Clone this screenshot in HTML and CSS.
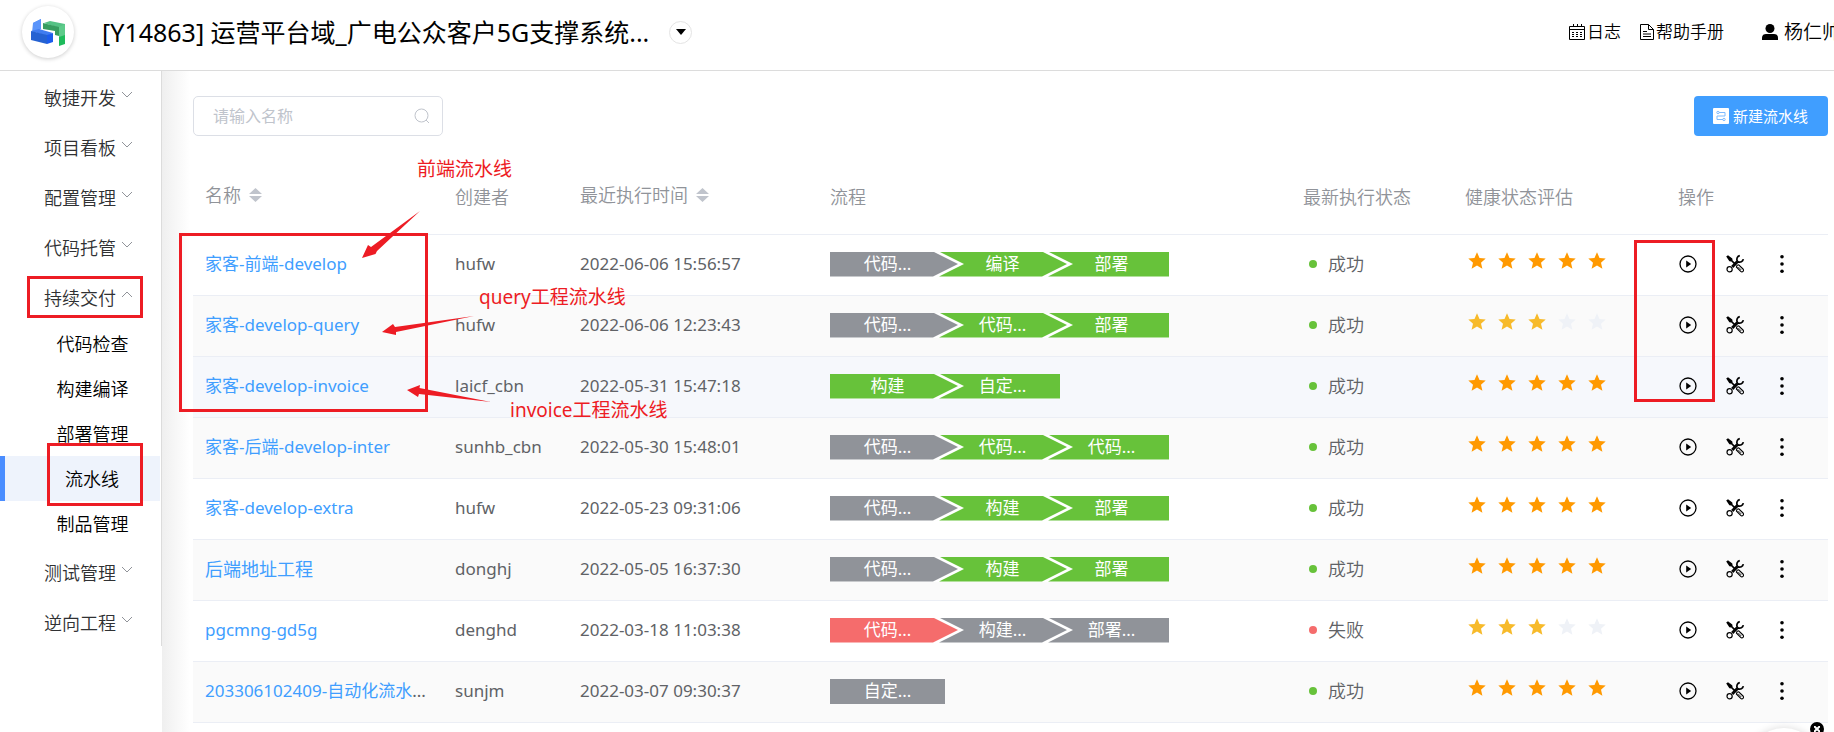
FILE: index.html
```html
<!DOCTYPE html>
<html lang="zh-CN">
<head>
<meta charset="utf-8">
<title>流水线</title>
<link rel="stylesheet" href="styles.css">
</head>
<body>
<svg class="sprite" aria-hidden="true">
  <symbol id="star" viewBox="0 0 24 24"><path d="M12 3.2l2.5 5.7 6.2.6-4.7 4.2 1.4 6.1-5.4-3.2-5.4 3.2L8 13.700 3.300 9.500l6.200-.6z"/></symbol>
  <symbol id="play" viewBox="0 0 20 20"><circle cx="10" cy="10" r="8" fill="none" stroke="currentColor" stroke-width="1.300"/><path d="M8.200 6.500v7l5-3.500z"/></symbol>
  <symbol id="tools" viewBox="0 0 20 20">
    <path d="M1.200 2.600 3 1.200l4.300 3.200.3 2 3 2.900-1.200 1.200-3-3-2-.3z"/>
    <path d="M12.100 11.200l1.600-.4 4.300 4.200a1.600 1.600 0 0 1-2.300 2.400l-4.300-4.400z" fill="none" stroke="currentColor" stroke-width="1.100"/>
    <path d="M13.300 13l3 3" fill="none" stroke="currentColor" stroke-width=".8"/>
    <path d="M14.800 1.700a3.700 3.700 0 0 0-2.600 5.200l-5.500 5.600" fill="none" stroke="currentColor" stroke-width="1.700"/>
    <path d="M18.300 5.200a3.700 3.700 0 0 1-5.300 2.600l-5.400 5.500" fill="none" stroke="currentColor" stroke-width="1.700"/>
    <circle cx="4.600" cy="15.300" r="2.600" fill="none" stroke="currentColor" stroke-width="1.200"/>
  </symbol>
  <symbol id="more" viewBox="0 0 20 20"><circle cx="10" cy="2.800" r="1.800"/><circle cx="10" cy="10" r="1.800"/><circle cx="10" cy="17.200" r="1.800"/></symbol>
  <symbol id="sort" viewBox="0 0 13 14"><path d="M6.500 0 13 6H0zM0 8h13l-6.500 6z"/></symbol>
  <symbol id="down" viewBox="0 0 12 8"><path d="M1 1l5 5 5-5" fill="none" stroke="currentColor"/></symbol>
  <symbol id="up" viewBox="0 0 12 8"><path d="M1 6l5-5 5 5" fill="none" stroke="currentColor"/></symbol>
</svg>

<header class="topbar">
  <a class="logo" href="#" aria-label="首页">
    <svg width="36" height="28" viewBox="0 0 36 28">
      <path d="M3 5l8-4-2 12-7 3z" fill="#4b87f5"/>
      <path d="M3 5l8-4v10l-8 4z" fill="#5a94fa"/>
      <path d="M1 13l8-2 14 4-6 3z" fill="#3f7cf0"/>
      <path d="M1 13l16 4v9L1 22z" fill="#2562d2"/>
      <path d="M17 17l6-2v9l-6 2z" fill="#1c5cec"/>
      <path d="M14 5l6-2 15 3v3l-6 1z" fill="#55c285"/>
      <path d="M13 5l16 4v9l-4-1v-4l-12-2z" fill="#379d60"/>
      <path d="M29 9l6-3v12l-6 2z" fill="#5dcb8a"/>
      <path d="M29 19l6-2v9l-6 2z" fill="#1ebb5b"/>
    </svg>
  </a>
  <h1 class="project">[Y14863] 运营平台域_广电公众客户5G支撑系统...</h1>
  <button class="switch" type="button" aria-label="切换项目"><svg width="10" height="6" viewBox="0 0 10 6"><path d="M0 0h10L5 6z"/></svg></button>
  <nav class="tools">
    <a href="#"><svg width="18" height="18" viewBox="0 0 18 18" fill="none" stroke="currentColor"><path d="M1.500 3.500h15v13h-15zM1.500 6.500h15M5.500 1v3M9.500 1v3M13.500 1v3"/><path d="M4 9.500h10M4 11.500h10M4 13.500h10" stroke-dasharray="2 2"/></svg>日志</a>
    <a href="#"><svg width="16" height="18" viewBox="0 0 16 18" fill="none" stroke="currentColor"><path d="M1.500 1.500h8l5 5v10h-13zM9.500 1.500v5h5M4 8.500h4M4 11h8M4 13.500h8"/></svg>帮助手册</a>
    <a class="user" href="#"><svg width="16" height="18" viewBox="0 0 16 18"><circle cx="8" cy="5.500" r="4.500"/><path d="M0 17v-2.500c0-2.500 2-3.500 4-3.500h8c2 0 4 1 4 3.500V17z"/></svg><span>杨仁帅</span></a>
  </nav>
</header>

<div class="layout">
  <aside class="side">
    <nav class="menu">
      <a class="item" href="#">敏捷开发<svg class="arrow"><use href="#down"/></svg></a>
      <a class="item" href="#">项目看板<svg class="arrow"><use href="#down"/></svg></a>
      <a class="item" href="#">配置管理<svg class="arrow"><use href="#down"/></svg></a>
      <a class="item" href="#">代码托管<svg class="arrow"><use href="#down"/></svg></a>
      <a class="item" href="#">持续交付<svg class="arrow"><use href="#up"/></svg></a>
      <a class="sub" href="#">代码检查</a>
      <a class="sub" href="#">构建编译</a>
      <a class="sub" href="#">部署管理</a>
      <a class="sub active" href="#">流水线</a>
      <a class="sub" href="#">制品管理</a>
      <a class="item" href="#">测试管理<svg class="arrow"><use href="#down"/></svg></a>
      <a class="item" href="#">逆向工程<svg class="arrow"><use href="#down"/></svg></a>
    </nav>
  </aside>

  <main class="main">
    <div class="bar">
      <label class="search">
        <input type="text" placeholder="请输入名称" aria-label="请输入名称">
        <svg width="16" height="16" viewBox="0 0 16 16" fill="none" stroke="currentColor"><circle cx="7.500" cy="7.500" r="6.500"/><path d="M12 12l3 3"/></svg>
      </label>
      <button class="create" type="button">
        <svg width="16" height="16" viewBox="0 0 16 16"><rect width="16" height="16" rx="1" fill="#fff"/><path d="M6 4.500h6v3.500H4v3.500h6" fill="none" stroke="#7dbbff"/><circle cx="5" cy="4.500" r="1.200" fill="none" stroke="#7dbbff"/><circle cx="11" cy="11.500" r="1.200" fill="none" stroke="#7dbbff"/></svg>新建流水线</button>
    </div>

    <table class="grid">
      <colgroup><col class="c-name"><col class="c-owner"><col class="c-time"><col><col class="c-state"><col class="c-rate"><col class="c-ops"></colgroup>
      <thead>
        <tr><th><span class="sortable">名称<svg><use href="#sort"/></svg></span></th><th>创建者</th><th><span class="sortable">最近执行时间<svg><use href="#sort"/></svg></span></th><th>流程</th><th>最新执行状态</th><th>健康状态评估</th><th>操作</th></tr>
      </thead>
      <tbody>
        <tr>
          <td><a href="#">家客-前端-develop</a></td><td>hufw</td><td>2022-06-06 15:56:57</td>
          <td><ol class="flow"><li class="idle">代码...</li><li class="ok">编译</li><li class="ok">部署</li></ol></td>
          <td><span class="state">成功</span></td>
          <td><div class="rate" role="img" aria-label="5 / 5"><svg><use href="#star"/></svg><svg><use href="#star"/></svg><svg><use href="#star"/></svg><svg><use href="#star"/></svg><svg><use href="#star"/></svg></div></td>
          <td><div class="ops"><button type="button" aria-label="执行"><svg><use href="#play"/></svg></button><button type="button" aria-label="配置"><svg><use href="#tools"/></svg></button><button type="button" aria-label="更多"><svg><use href="#more"/></svg></button></div></td>
        </tr>
        <tr>
          <td><a href="#">家客-develop-query</a></td><td>hufw</td><td>2022-06-06 12:23:43</td>
          <td><ol class="flow"><li class="idle">代码...</li><li class="ok">代码...</li><li class="ok">部署</li></ol></td>
          <td><span class="state">成功</span></td>
          <td><div class="rate mid" role="img" aria-label="3 / 5"><svg><use href="#star"/></svg><svg><use href="#star"/></svg><svg><use href="#star"/></svg><svg class="off"><use href="#star"/></svg><svg class="off"><use href="#star"/></svg></div></td>
          <td><div class="ops"><button type="button" aria-label="执行"><svg><use href="#play"/></svg></button><button type="button" aria-label="配置"><svg><use href="#tools"/></svg></button><button type="button" aria-label="更多"><svg><use href="#more"/></svg></button></div></td>
        </tr>
        <tr class="hovered">
          <td><a href="#">家客-develop-invoice</a></td><td>laicf_cbn</td><td>2022-05-31 15:47:18</td>
          <td><ol class="flow"><li class="ok">构建</li><li class="ok">自定...</li></ol></td>
          <td><span class="state">成功</span></td>
          <td><div class="rate" role="img" aria-label="5 / 5"><svg><use href="#star"/></svg><svg><use href="#star"/></svg><svg><use href="#star"/></svg><svg><use href="#star"/></svg><svg><use href="#star"/></svg></div></td>
          <td><div class="ops"><button type="button" aria-label="执行"><svg><use href="#play"/></svg></button><button type="button" aria-label="配置"><svg><use href="#tools"/></svg></button><button type="button" aria-label="更多"><svg><use href="#more"/></svg></button></div></td>
        </tr>
        <tr class="leaving">
          <td><a href="#">家客-后端-develop-inter</a></td><td>sunhb_cbn</td><td>2022-05-30 15:48:01</td>
          <td><ol class="flow"><li class="idle">代码...</li><li class="ok">代码...</li><li class="ok">代码...</li></ol></td>
          <td><span class="state">成功</span></td>
          <td><div class="rate" role="img" aria-label="5 / 5"><svg><use href="#star"/></svg><svg><use href="#star"/></svg><svg><use href="#star"/></svg><svg><use href="#star"/></svg><svg><use href="#star"/></svg></div></td>
          <td><div class="ops"><button type="button" aria-label="执行"><svg><use href="#play"/></svg></button><button type="button" aria-label="配置"><svg><use href="#tools"/></svg></button><button type="button" aria-label="更多"><svg><use href="#more"/></svg></button></div></td>
        </tr>
        <tr>
          <td><a href="#">家客-develop-extra</a></td><td>hufw</td><td>2022-05-23 09:31:06</td>
          <td><ol class="flow"><li class="idle">代码...</li><li class="ok">构建</li><li class="ok">部署</li></ol></td>
          <td><span class="state">成功</span></td>
          <td><div class="rate" role="img" aria-label="5 / 5"><svg><use href="#star"/></svg><svg><use href="#star"/></svg><svg><use href="#star"/></svg><svg><use href="#star"/></svg><svg><use href="#star"/></svg></div></td>
          <td><div class="ops"><button type="button" aria-label="执行"><svg><use href="#play"/></svg></button><button type="button" aria-label="配置"><svg><use href="#tools"/></svg></button><button type="button" aria-label="更多"><svg><use href="#more"/></svg></button></div></td>
        </tr>
        <tr>
          <td><a class="cjk" href="#">后端地址工程</a></td><td>donghj</td><td>2022-05-05 16:37:30</td>
          <td><ol class="flow"><li class="idle">代码...</li><li class="ok">构建</li><li class="ok">部署</li></ol></td>
          <td><span class="state">成功</span></td>
          <td><div class="rate" role="img" aria-label="5 / 5"><svg><use href="#star"/></svg><svg><use href="#star"/></svg><svg><use href="#star"/></svg><svg><use href="#star"/></svg><svg><use href="#star"/></svg></div></td>
          <td><div class="ops"><button type="button" aria-label="执行"><svg><use href="#play"/></svg></button><button type="button" aria-label="配置"><svg><use href="#tools"/></svg></button><button type="button" aria-label="更多"><svg><use href="#more"/></svg></button></div></td>
        </tr>
        <tr>
          <td><a href="#">pgcmng-gd5g</a></td><td>denghd</td><td>2022-03-18 11:03:38</td>
          <td><ol class="flow"><li class="bad">代码...</li><li class="idle">构建...</li><li class="idle">部署...</li></ol></td>
          <td><span class="state failed">失败</span></td>
          <td><div class="rate mid" role="img" aria-label="3 / 5"><svg><use href="#star"/></svg><svg><use href="#star"/></svg><svg><use href="#star"/></svg><svg class="off"><use href="#star"/></svg><svg class="off"><use href="#star"/></svg></div></td>
          <td><div class="ops"><button type="button" aria-label="执行"><svg><use href="#play"/></svg></button><button type="button" aria-label="配置"><svg><use href="#tools"/></svg></button><button type="button" aria-label="更多"><svg><use href="#more"/></svg></button></div></td>
        </tr>
        <tr>
          <td><a href="#">203306102409-自动化流水</a>...</td><td>sunjm</td><td>2022-03-07 09:30:37</td>
          <td><ol class="flow"><li class="idle">自定...</li></ol></td>
          <td><span class="state">成功</span></td>
          <td><div class="rate" role="img" aria-label="5 / 5"><svg><use href="#star"/></svg><svg><use href="#star"/></svg><svg><use href="#star"/></svg><svg><use href="#star"/></svg><svg><use href="#star"/></svg></div></td>
          <td><div class="ops"><button type="button" aria-label="执行"><svg><use href="#play"/></svg></button><button type="button" aria-label="配置"><svg><use href="#tools"/></svg></button><button type="button" aria-label="更多"><svg><use href="#more"/></svg></button></div></td>
        </tr>
      </tbody>
    </table>
  </main>
</div>

<div class="notes">
  <div class="frame frame-menu"></div>
  <div class="frame frame-sub"></div>
  <div class="frame frame-names"></div>
  <div class="frame frame-run"></div>
  <svg class="arrows" width="140" height="210" viewBox="360 200 140 210">
    <path d="M420 211l-43 40-1.500 3-13.500 4 6-13 3 2z"/>
    <path d="M474 316l-78 16v3l-14-3 11-8 2 3z"/>
    <path d="M491 402l-72-8-1 3-11-7 13-5-.5 3z"/>
  </svg>
  <span class="note note-front">前端流水线</span>
  <span class="note note-query">query工程流水线</span>
  <span class="note note-invoice">invoice工程流水线</span>
</div>

<div class="bubble"></div>
<button class="dismiss" type="button" aria-label="关闭"><svg width="6" height="6" viewBox="0 0 6 6" stroke="#fff" stroke-width="2"><path d="M0 0l6 6M6 0L0 6"/></svg></button>
</body>
</html>
```

FILE: styles.css
```css
* { box-sizing: border-box; }

body {
  margin: 0;
  height: 100vh;
  overflow: hidden;
  display: flex;
  flex-direction: column;
  background: #fff;
  color: #606266;
  fill: currentColor;
  font: 17px/24px "Noto Sans", "Noto Sans CJK SC", sans-serif;
}

a { color: inherit; text-decoration: none; }
button { padding: 0; border: 0; background: none; font: inherit; color: inherit; cursor: pointer; }
svg { flex: none; }
.sprite { position: absolute; width: 0; height: 0; }

/* Top bar */
.topbar {
  flex: none;
  display: flex;
  align-items: center;
  height: 71px;
  padding: 0 0 6px 22px;
  border-bottom: 1px solid #dcdcdc;
  color: #000;
  overflow: hidden;
}
.logo {
  flex: none;
  display: flex;
  align-items: center;
  justify-content: center;
  width: 52px;
  height: 52px;
  border-radius: 50%;
  box-shadow: 0 1px 4px rgba(0, 0, 0, .2);
}
.project { margin: 0 0 0 28px; font-size: 25px; font-weight: 400; line-height: 36px; white-space: nowrap; }
.switch {
  flex: none;
  display: flex;
  align-items: center;
  justify-content: center;
  width: 23px;
  height: 23px;
  margin-left: 20px;
  border: 1px solid #e4e4e4;
  border-radius: 50%;
}
.tools { display: flex; align-items: center; gap: 18px; margin-left: auto; white-space: nowrap; font-size: 17px; font-weight: 350; }
.tools a { display: flex; align-items: center; gap: 1px; }
.tools .user { gap: 6px; margin-left: 20px; font-size: 19px; }
.user span { width: 50px; overflow: hidden; }

/* Page body */
.layout { flex: 1; display: flex; min-height: 0; }
.side { flex: none; width: 162px; }
.menu { border-right: 1px solid #dcdcdc; font-size: 18px; font-weight: 350; }
.item {
  display: flex;
  align-items: center;
  gap: 5px;
  height: 50px;
  padding: 4px 0 0 44px;
  color: #303133;
}
.arrow { width: 12px; height: 8px; margin-bottom: 6px; color: #909399; }
.sub {
  display: flex;
  align-items: center;
  justify-content: center;
  height: 45px;
  padding-left: 24px;
  color: #000;
}
.sub.active {
  margin-right: 1px;
  padding-left: 19px;
  border-left: 5px solid #4a8dff;
  background: #eef3fc;
}
.main {
  flex: 1;
  min-width: 0;
  padding: 25px 6px 0 31px;
  background: linear-gradient(to right, #efefef, #fff 28px);
}
.bar { display: flex; align-items: center; justify-content: space-between; height: 40px; margin-bottom: 25px; }
.search {
  display: flex;
  align-items: center;
  width: 250px;
  height: 40px;
  padding: 0 12px 0 19px;
  border: 1px solid #dcdfe6;
  border-radius: 5px;
  background: #fff;
  color: #c0c4cc;
}
.search input { flex: 1; min-width: 0; padding: 0; border: 0; outline: 0; background: none; font: inherit; font-size: 16px; color: #606266; }
.search input::placeholder { color: #c0c4cc; opacity: 1; }
.create {
  display: flex;
  align-items: center;
  gap: 4px;
  height: 40px;
  padding: 0 20px 0 19px;
  border-radius: 4px;
  background: #409eff;
  color: #fff;
  font-size: 15px;
}

/* Pipeline table */
.grid { width: 100%; table-layout: fixed; border-collapse: separate; border-spacing: 0; background: #fff; }
.c-name, .c-time { width: 250px; }
.c-owner { width: 125px; }
.c-state, .c-ops { width: 162px; }
.c-rate { width: 213px; }
.grid th, .grid td { height: 61px; padding: 0 12px 2px; border-bottom: 1px solid #ebeef5; text-align: left; white-space: nowrap; }
.grid th { height: 74px; color: #909399; font-size: 18px; font-weight: 350; }
.grid tbody tr:nth-child(even) { background: #fafafa; }
.grid tbody .hovered { background: #f6f8fc; }
.grid tbody .leaving { background: #f9fbfa; }
.grid td a { color: #409eff; }
.grid td .cjk { font-size: 18px; }
.sortable { display: flex; align-items: center; gap: 8px; padding-bottom: 3px; }
.sortable svg { width: 13px; height: 14px; color: #c0c4cc; }

.flow { display: flex; width: max-content; margin: 0; padding: 0; list-style: none; background: #fff; color: #fff; line-height: 24px; text-align: center; }
.flow li { box-sizing: content-box; width: 115px; height: 25px; background: #909399; }
.flow .ok { background: #67c23a; }
.flow .bad { background: #f56c6c; }
.flow li + li { margin-left: -25px; padding-left: 12px; clip-path: polygon(6px 0, 100% 0, 100% 100%, 6px 100%, 31px 50%); }
.flow li:first-child:not(:last-child) { padding-right: 13px; clip-path: polygon(0 0, calc(100% - 25px) 0, 100% 50%, calc(100% - 25px) 100%, 0 100%); }
.flow li + li:not(:last-child) { padding-right: 7px; clip-path: polygon(6px 0, calc(100% - 25px) 0, 100% 50%, calc(100% - 25px) 100%, 6px 100%, 31px 50%); }

.state { display: flex; align-items: center; gap: 11px; padding-left: 6px; font-size: 18px; font-weight: 350; }
.state::before { content: ""; width: 8px; height: 8px; border-radius: 50%; background: #67c23a; }
.state.failed::before { background: #f56c6c; }

.rate { display: flex; gap: 6px; padding-bottom: 6px; color: #f90; }
.rate svg { width: 24px; height: 24px; }
.rate.mid { color: #f7ba2a; }
.rate .off { color: #eff2f7; }

.ops { display: flex; gap: 27px; color: #000; }
.ops button, .ops svg { display: block; width: 20px; height: 20px; }

/* Annotations drawn over the page */
.notes { position: absolute; top: 0; left: 0; color: #ed1c24; pointer-events: none; }
.frame { position: absolute; border: 3px solid #ed1c24; }
.frame-menu { left: 27px; top: 276px; width: 116px; height: 42px; }
.frame-sub { left: 47px; top: 443px; width: 96px; height: 63px; }
.frame-names { left: 179px; top: 233px; width: 249px; height: 179px; }
.frame-run { left: 1634px; top: 240px; width: 81px; height: 162px; }
.arrows { position: absolute; left: 360px; top: 200px; }
.note { position: absolute; font-size: 19px; line-height: 24px; white-space: nowrap; }
.note-front { left: 417px; top: 157px; }
.note-query { left: 479px; top: 285px; }
.note-invoice { left: 510px; top: 398px; }

.bubble {
  position: fixed;
  right: 12px;
  bottom: -72px;
  width: 76px;
  height: 76px;
  border-radius: 50%;
  background: #fff;
  box-shadow: 0 0 8px rgba(0, 0, 0, .15);
}
.dismiss {
  position: fixed;
  right: 10px;
  bottom: -4px;
  display: flex;
  align-items: center;
  justify-content: center;
  width: 14px;
  height: 14px;
  border-radius: 50%;
  background: #000;
}
```
